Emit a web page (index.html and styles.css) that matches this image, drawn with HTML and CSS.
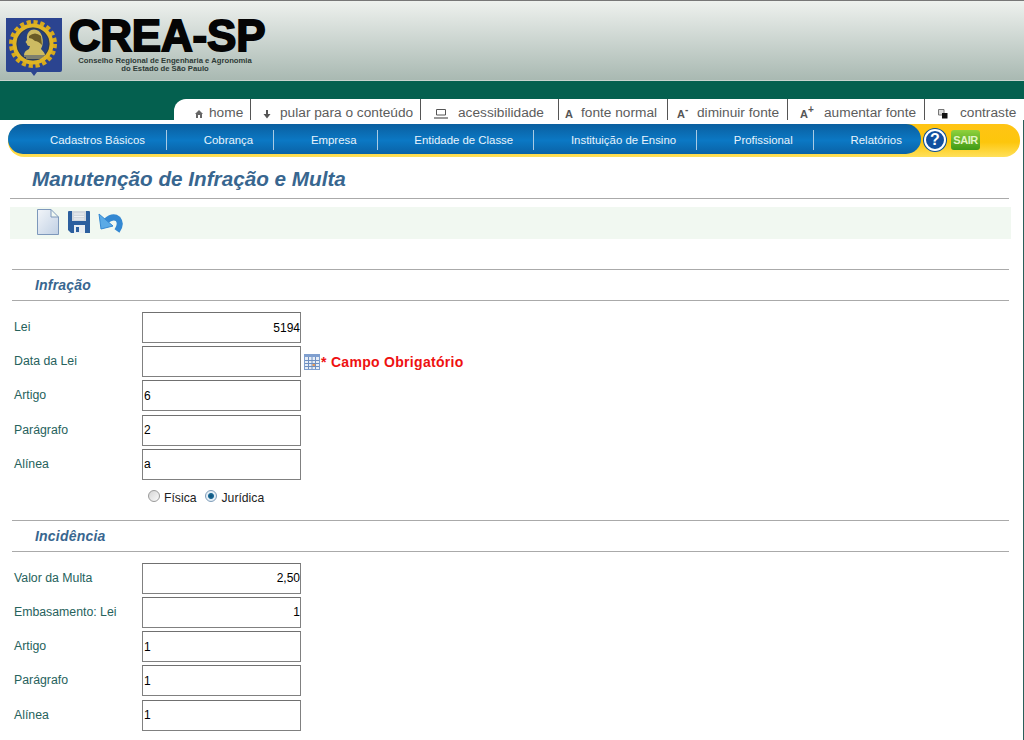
FILE: index.html
```html
<!DOCTYPE html>
<html lang="pt-BR">
<head>
    <meta charset="UTF-8">
    <title>CREA-SP - Manutenção de Infração e Multa</title>
    <link rel="stylesheet" href="styles.css">
</head>
<body>
    <!-- Cabecalho -->
    <div class="header">
        <svg class="brasao" width="56" height="59" viewBox="0 0 56 59">
            <path d="M0 0H56V52Q56 54 54 54H31L28 58L25 54H2Q0 54 0 52Z" fill="#2b4490"/>
            <circle cx="27" cy="26" r="22" fill="none" stroke="#d8a91c" stroke-width="4" stroke-dasharray="4.200 2.700"/>
            <circle cx="27" cy="26" r="18.500" fill="none" stroke="#e0b524" stroke-width="4"/>
            <circle cx="27" cy="26" r="16" fill="#24407f" stroke="#3a3a20" stroke-width=".6"/>
            <path d="M25 12Q33 10 36 18Q38 26 35 31Q39 35 39 37H18Q18 33 23 31L24 28Q21 28 21 26L19.500 24L21 22Q20 15 25 12Z" fill="#cdbb62"/>
            <path d="M23 18Q29 13 35 18L36 27Q32 23 29 23Q26 20 23 20Z" fill="#6a5c26"/>
            <path d="M18 38H39M20 40H37" stroke="#d8c060" stroke-width="1.200"/>
        </svg>
        <div class="marca">
            <div class="marca-nome">CREA-SP</div>
            <div class="marca-sub">Conselho Regional de Engenharia e Agronomia<br>do Estado de São Paulo</div>
        </div>
    </div>

    <div class="faixa">
        <ul class="acessos">
            <li><svg width="10" height="10" viewBox="0 0 10 10"><path d="M5 1L9 5H8V9H6V6H4V9H2V5H1Z" fill="#666"/></svg>home</li>
            <li><svg width="10" height="10" viewBox="0 0 10 10"><path d="M4 1H6V5H8.500L5 9.500L1.500 5H4Z" fill="#555"/></svg>pular para o conteúdo</li>
            <li><svg width="14" height="10" viewBox="0 0 14 10"><path d="M2.500 .5H11.500V6H2.500Z" fill="none" stroke="#555"/><path d="M0 8H14V10H0Z" fill="#999"/></svg>acessibilidade</li>
            <li><span class="letra">A</span>fonte normal</li>
            <li><span class="letra">A<sup>-</sup></span>diminuir fonte</li>
            <li><span class="letra">A<sup>+</sup></span>aumentar fonte</li>
            <li><svg width="10" height="10" viewBox="0 0 10 10"><path d="M.5 .5H6V6H.5Z" fill="#ddd" stroke="#777"/><path d="M4 4H9.500V9.500H4Z" fill="#111"/></svg>contraste</li>
        </ul>
    </div>

    <div class="painel">
        <div class="menu-fundo">
            <ul class="menu">
                <li>Cadastros Básicos</li>
                <li>Cobrança</li>
                <li>Empresa</li>
                <li>Entidade de Classe</li>
                <li>Instituição de Ensino</li>
                <li>Profissional</li>
                <li>Relatórios</li>
            </ul>
            <div class="ajuda">?</div>
            <div class="sair">SAIR</div>
        </div>

        <h1 class="titulo">Manutenção de Infração e Multa</h1>

        <div class="toolbar">
            <svg width="24" height="26" viewBox="0 0 24 26">
                <defs><linearGradient id="folha" x1="0" y1="0" x2="1" y2="1"><stop offset="0" stop-color="#f2f5f9"/><stop offset="1" stop-color="#c0d0e4"/></linearGradient></defs>
                <path d="M1.500 .5H15V8H22.500V25.500H1.500Z" fill="url(#folha)" stroke="#7d98bb"/>
                <path d="M15 .5L22.500 8" stroke="#7d98bb"/>
            </svg>
            <svg width="24" height="24" viewBox="0 0 24 24">
                <path d="M1 2Q1 1 2 1H22Q23 1 23 2V23H4L1 20Z" fill="#2c5f9e"/>
                <path d="M5 1H19V11H5Z" fill="#d3d8de"/>
                <path d="M7 4H17M7 6.500H17M7 9H17" stroke="#eef1f4"/>
                <path d="M7 15H18V23H7Z" fill="#e8edf2"/>
                <path d="M9 17H12V22H9Z" fill="#2c5f9e"/>
            </svg>
            <svg width="25" height="22" viewBox="0 0 25 22">
                <path d="M8 10Q15 4 20 8Q24 13 19 20" fill="none" stroke="#3488d2" stroke-width="6"/>
                <path d="M1 3L3 18L15 15Z" fill="#5aaae6" stroke="#3488d2" stroke-linejoin="round"/>
            </svg>
        </div>

        <div class="secao"><h2>Infração</h2></div>
        <div class="linhas">
            <div class="linha"><label>Lei</label><input class="direita" value="5194"></div>
            <div class="linha"><label>Data da Lei</label><input>
                <svg class="cal" width="16" height="16" viewBox="0 0 16 16">
                    <path d="M0 0H16V16H0Z" fill="#7f9fcf"/>
                    <path d="M1 3H15V15H1Z" fill="#e6edf6"/>
                    <path d="M1 6.500H15M1 9.500H15M1 12.500H15M4.500 3V15M8 3V15M11.500 3V15" stroke="#6f8fc0"/>
                    <path d="M8.500 10H11V12H8.500Z" fill="#e59a5a"/>
                </svg>
                <span class="obrigatorio">* Campo Obrigatório</span>
            </div>
            <div class="linha"><label>Artigo</label><input value="6"></div>
            <div class="linha"><label>Parágrafo</label><input value="2"></div>
            <div class="linha"><label>Alínea</label><input value="a"></div>
        </div>
        <div class="tipo">
            <input type="radio" name="tipo" id="fisica"><label for="fisica">Física</label>
            <input type="radio" name="tipo" id="juridica" checked><label for="juridica">Jurídica</label>
        </div>

        <div class="secao"><h2>Incidência</h2></div>
        <div class="linhas">
            <div class="linha"><label>Valor da Multa</label><input class="direita" value="2,50"></div>
            <div class="linha"><label>Embasamento: Lei</label><input class="direita" value="1"></div>
            <div class="linha"><label>Artigo</label><input value="1"></div>
            <div class="linha"><label>Parágrafo</label><input value="1"></div>
            <div class="linha"><label>Alínea</label><input value="1"></div>
        </div>
    </div>
</body>
</html>
```

FILE: styles.css
```css
html, body {
    margin: 0;
    padding: 0;
    height: 740px;
    overflow: hidden;
}
body {
    font-family: "Liberation Sans", Arial, sans-serif;
    background-color: #ffffff;
    color: #000;
}
.header {
    height: 81px;
    box-sizing: border-box;
    border-top: 1px solid #777;
    border-bottom: 1px solid #c8d4cf;
    background: linear-gradient(#eef1ee, #a9b9b2);
    display: flex;
    align-items: flex-start;
    padding: 17px 0 0 6px;
}
.brasao {
    display: block;
}
.marca {
    margin-left: 6px;
    width: 198px;
    text-align: center;
}
.marca-nome {
    font-size: 44px;
    line-height: 36px;
    font-weight: bold;
    color: #050505;
    -webkit-text-stroke: 1.8px #050505;
    letter-spacing: -.2px;
    white-space: nowrap;
}
.marca-sub {
    font-size: 7.700px;
    line-height: 8px;
    font-weight: bold;
    color: #2e3a36;
    margin: 3px 0 0 -4px;
    white-space: nowrap;
}
.faixa {
    background-color: #04604f;
    height: 39px;
    padding-top: 18px;
    box-sizing: border-box;
    overflow: hidden;
}
.acessos {
    list-style: none;
    margin: 0 0 0 174px;
    padding: 0;
    height: 21px;
    display: grid;
    grid-template-columns: 77px 170px 138px 109px 120px 137px 1fr;
    background-color: #fff;
    border-top-left-radius: 12px;
    font-size: 13.700px;
    color: #5c5c5c;
}
.acessos li {
    border-right: 1px solid #555;
    white-space: nowrap;
    height: 21px;
    display: flex;
    align-items: center;
    padding-top: 5px;
    box-sizing: border-box;
}
.acessos li:last-child {
    border-right: none;
}
.acessos svg {
    flex: none;
    margin-top: 3px;
}
.acessos li:nth-child(1) { padding-left: 20px; }
.acessos li:nth-child(1) svg { margin-right: 5px; }
.acessos li:nth-child(2) { padding-left: 11px; }
.acessos li:nth-child(2) svg { margin-right: 8px; }
.acessos li:nth-child(3) { padding-left: 13px; }
.acessos li:nth-child(3) svg { margin-right: 10px; }
.acessos li:nth-child(4) { padding-left: 6px; }
.acessos li:nth-child(4) .letra { width: 16px; }
.acessos li:nth-child(5) { padding-left: 9px; }
.acessos li:nth-child(5) .letra { width: 20px; }
.acessos li:nth-child(6) { padding-left: 12px; }
.acessos li:nth-child(6) .letra { width: 24px; }
.acessos li:nth-child(7) { padding-left: 13px; }
.acessos li:nth-child(7) svg { margin-right: 12px; }
.letra {
    flex: none;
    font-size: 11px;
    font-weight: bold;
    color: #555;
    margin-top: 4px;
    line-height: 12px;
}
.letra sup {
    font-size: 10px;
    line-height: 0;
}
.painel {
    background-color: #fff;
    border-top-left-radius: 14px;
    border-right: 1px solid #2b5f5a;
    padding-top: 4px;
    height: 620px;
    box-sizing: border-box;
}
.menu-fundo {
    margin: 0 3px 0 8px;
    height: 33px;
    border-radius: 16px;
    background: linear-gradient(#ffc414, #fdc60c 55%, #ffe05a);
    display: flex;
    align-items: flex-start;
}
.menu {
    list-style: none;
    margin: 0;
    padding: 0;
    width: 913px;
    height: 30px;
    border-radius: 15px;
    background: linear-gradient(#0a5f9f, #0b78c4 55%, #0a62a6);
    display: flex;
    align-items: center;
    font-size: 11.400px;
    color: #e9f3fb;
    flex: none;
}
.menu li {
    padding: 0 20px 0 36.800px;
    line-height: 20px;
    border-right: 1px solid #a9cbe4;
    white-space: nowrap;
    position: relative;
    top: 1px;
}
.menu li:first-child {
    padding: 0 21px 0 42px;
}
.menu li:last-child {
    border-right: none;
}
.ajuda {
    flex: none;
    width: 18px;
    height: 18px;
    margin: 5px 0 0 3px;
    border: 2px solid #fff;
    box-shadow: 0 0 0 1px #0a4f96;
    border-radius: 50%;
    background-color: #124f9f;
    color: #fff;
    font-size: 16px;
    font-weight: bold;
    line-height: 18px;
    text-align: center;
}
.sair {
    flex: none;
    margin: 6px 0 0 5px;
    width: 29px;
    height: 20px;
    border-radius: 3px;
    background: linear-gradient(#8fd13c, #3f9a16);
    color: #e4f5c4;
    font-size: 11px;
    font-weight: bold;
    letter-spacing: -.5px;
    line-height: 20px;
    text-align: center;
}
.titulo {
    margin: 9px 14px 0 10px;
    padding: 0 0 6px 22px;
    font-size: 20.700px;
    line-height: 26px;
    font-weight: bold;
    font-style: italic;
    color: #38668f;
    border-bottom: 1px solid #aaa;
}
.toolbar {
    margin: 8px 12px 0 10px;
    height: 32px;
    box-sizing: border-box;
    padding: 0 0 2px 26px;
    background-color: #f1f8f1;
    display: flex;
    align-items: center;
    gap: 7px;
}
.secao {
    margin: 30px 14px 0 12px;
    height: 30px;
    border-top: 1px solid #aaa;
    border-bottom: 1px solid #aaa;
}
.secao h2 {
    margin: 0;
    padding-left: 23px;
    font-size: 14px;
    line-height: 31px;
    font-style: italic;
    font-weight: bold;
    color: #38668f;
    letter-spacing: .2px;
}
.tipo + .secao {
    margin-top: 11px;
}
.linhas {
    margin-top: 11px;
    padding-left: 14px;
}
.linha {
    display: flex;
    align-items: center;
    height: 31px;
    margin-bottom: 3.200px;
}
.linha label {
    width: 128px;
    font-size: 12.300px;
    color: #26625c;
    position: relative;
    top: -.5px;
}
.linha input {
    width: 159px;
    height: 31px;
    box-sizing: border-box;
    border: 1px solid #808080;
    border-top-color: #707070;
    padding: 0 0 0 1px;
    font-family: "Liberation Sans", Arial, sans-serif;
    font-size: 12px;
    color: #000;
    background: #fff;
    border-radius: 0;
    outline: none;
}
.linha .direita {
    text-align: right;
    padding: 0;
}
.cal {
    margin-left: 3px;
    flex: none;
}
.obrigatorio {
    margin-left: 1px;
    font-size: 14px;
    font-weight: bold;
    color: #ee1111;
    letter-spacing: .3px;
}
.tipo {
    margin: 7px 0 0 148px;
    height: 22px;
    display: flex;
    align-items: center;
    font-size: 12.200px;
    color: #222;
}
.tipo input {
    appearance: none;
    margin: 0 4px 3px 0;
    width: 12px;
    height: 12px;
    border-radius: 50%;
    border: 1px solid #9a9a9a;
    background: linear-gradient(135deg, #d5d5d5, #fafafa);
    box-sizing: border-box;
}
.tipo input:checked {
    margin-right: 5px;
    border-color: #7f9db9;
    background: radial-gradient(circle, #0d4f78 0, #1c6a96 2.500px, #e4eef6 3.500px);
}
.tipo label {
    margin-right: 8px;
}
```
